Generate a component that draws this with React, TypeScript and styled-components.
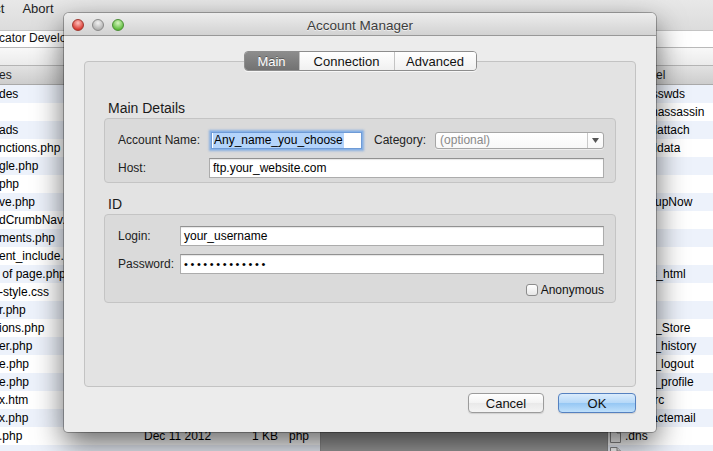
import React from "react";
import styled, { createGlobalStyle, css } from "styled-components";

const GlobalStyle = createGlobalStyle`
    html, body {
        margin: 0;
        padding: 0;
        background: #e2e2e2;
    }
    body {
        font-family: "Liberation Sans", Arial, sans-serif;
    }
    * {
        box-sizing: border-box;
    }
`;

// only the tails of the local file names show beside the dialog
const leftRows = [
    "des", "", "ads", "nctions.php", "gle.php", "php", "ve.php", "dCrumbNav.php",
    "ments.php", "ent_include.php", "\u00a0of page.php", "-style.css", "r.php",
    "ions.php", "er.php", "e.php", "e.php", "x.htm", "x.php", ".php", "",
];

const rightRows = [
    ".htpasswds", ".spamassassin", ".emailattach", ".emaildata", "etc", "mail",
    ".BackupNow", "logs", "ssl", "perl", "public_html", "tmp", "www", ".._DS_Store",
    ".bash_history", ".bash_logout", ".bash_profile", ".bashrc", ".contactemail",
    ".dns", "",
];

// the row whose details are visible under the dialog
const DETAIL_ROW = 19;

const App = () => {
    return (
        <Desktop>
            <GlobalStyle />
            <Toolbar>
                <ToolLabel>Connect</ToolLabel>
                <ToolLabel>Abort</ToolLabel>
            </Toolbar>
            <PathBar>cator Developer Tools</PathBar>
            <SubBar />
            <Panes>
                <LeftPane>
                    <ListHeader>
                        <NameCell>es</NameCell>
                    </ListHeader>
                    {leftRows.map((name, i) => (
                        <LeftRow key={i} $striped={i % 2 === 0}>
                            <NameCell>{name}</NameCell>
                            {i === DETAIL_ROW && (
                                <>
                                    <span>Dec 11 2012</span>
                                    <SizeCell>1 KB</SizeCell>
                                    <KindCell>php</KindCell>
                                </>
                            )}
                        </LeftRow>
                    ))}
                </LeftPane>
                <MiddlePane />
                <RightPane>
                    <RightHeader>Label</RightHeader>
                    {rightRows.map((name, i) => (
                        <RightRow key={i} $striped={i % 2 === 0}>
                            <FileIcon />
                            {name && <span>{name}</span>}
                        </RightRow>
                    ))}
                </RightPane>
            </Panes>

            <Dialog>
                <TitleBar>
                    <Lights>
                        <Light $kind="close" />
                        <Light $kind="min" />
                        <Light $kind="zoom" />
                    </Lights>
                    <Title>Account Manager</Title>
                    <span />
                </TitleBar>
                <Body>
                    <TabGroup>
                        <Tab $w={54} $active>Main</Tab>
                        <Tab $w={95}>Connection</Tab>
                        <Tab $w={82}>Advanced</Tab>
                    </TabGroup>
                    <Panel>
                        <Section>
                            <SectionTitle>Main Details</SectionTitle>
                            <GroupBox $padTop={11} $padBottom={4}>
                                <FormRow>
                                    <FieldLabel $w={93}>Account Name:</FieldLabel>
                                    <Field $focused>
                                        <Selected>Any_name_you_choose</Selected>
                                    </Field>
                                    <FieldLabel $ml={12}>Category:</FieldLabel>
                                    <Select>
                                        <Placeholder>(optional)</Placeholder>
                                        <SelectArrow>
                                            <svg width="7" height="5" viewBox="0 0 7 5">
                                                <polygon points="0,0 7,0 3.5,5" fill="#555" />
                                            </svg>
                                        </SelectArrow>
                                    </Select>
                                </FormRow>
                                <FormRow>
                                    <FieldLabel $w={91}>Host:</FieldLabel>
                                    <Field>ftp.your_website.com</Field>
                                </FormRow>
                            </GroupBox>
                        </Section>
                        <Section>
                            <SectionTitle>ID</SectionTitle>
                            <GroupBox $padTop={11} $padBottom={4}>
                                <FormRow>
                                    <FieldLabel $w={62}>Login:</FieldLabel>
                                    <Field>your_username</Field>
                                </FormRow>
                                <FormRow>
                                    <FieldLabel $w={62}>Password:</FieldLabel>
                                    <Field $secret>{"•".repeat(13)}</Field>
                                </FormRow>
                                <CheckRow>
                                    <Checkbox />
                                    <span>Anonymous</span>
                                </CheckRow>
                            </GroupBox>
                        </Section>
                    </Panel>
                    <ButtonRow>
                        <Button $w={76}>Cancel</Button>
                        <Button $w={78} $primary>OK</Button>
                    </ButtonRow>
                </Body>
            </Dialog>
        </Desktop>
    );
};

export default App;

const FileIcon = () => (
    <svg width="11" height="14" viewBox="0 0 11 14">
        <path d="M0.5 0.5 H7 L10.5 4 V13.5 H0.5 Z" fill="#fff" stroke="#8a8a8a" />
        <path d="M7 0.5 V4 H10.5" fill="#e8e8e8" stroke="#8a8a8a" />
    </svg>
);

/* ---------- background app ---------- */

const Desktop = styled.div`
    position: relative;
    width: 713px;
    height: 451px;
    overflow: hidden;
    display: flex;
    flex-direction: column;
    background: #e2e2e2;
    font-family: "Liberation Sans", Arial, sans-serif;
    color: #000;
`;

const Toolbar = styled.div`
    flex: none;
    height: 30px;
    display: flex;
    gap: 18px;
    margin-left: -44px;
    padding-top: 1px;
    background: linear-gradient(#e8e8e8, #dcdcdc);
    font-size: 13px;
    line-height: 16px;
    color: #1e1e1e;
`;

const ToolLabel = styled.span`
    white-space: nowrap;
`;

const PathBar = styled.div`
    flex: none;
    height: 17px;
    text-indent: -1px;
    background: #fff;
    border-top: 1px solid #c4c4c4;
    font-size: 12px;
    line-height: 15px;
    color: #111;
    white-space: nowrap;
    overflow: hidden;
`;

const SubBar = styled.div`
    flex: none;
    height: 19px;
    background: linear-gradient(#f8f8f8, #ebebeb);
    border-top: 1px solid #b9b9b9;
    border-bottom: 1px solid #b4b4b4;
`;

const Panes = styled.div`
    flex: 1;
    display: flex;
    min-height: 0;
`;

const LeftPane = styled.div`
    width: 321px;
    flex: none;
    background: #fff;
    border-right: 1px solid #8e8e8e;
    overflow: hidden;
`;

const listGrid = css`
    display: grid;
    grid-template-columns: 144px 100px 34px 1fr;
    font-size: 12px;
    white-space: nowrap;
`;

const ListHeader = styled.div`
    ${listGrid};
    height: 19px;
    line-height: 18px;
    background: linear-gradient(#e2e2e2, #cdcdcd);
    border-bottom: 1px solid #a9a9a9;
    color: #1e1e1e;
`;

const LeftRow = styled.div<{ $striped: boolean }>`
    ${listGrid};
    height: 18px;
    line-height: 18px;
    background: ${(p) => (p.$striped ? "#edf2fb" : "#ffffff")};
    color: #000;
`;

const NameCell = styled.span`
    overflow: hidden;
    text-indent: -1px;
`;

const SizeCell = styled.span`
    text-align: right;
`;

const KindCell = styled.span`
    padding-left: 11px;
`;

const MiddlePane = styled.div`
    flex: 1;
    background: #9c9c9c;
`;

const RightPane = styled.div`
    width: 106px;
    flex: none;
    background: #fff;
    border-left: 1px solid #8e8e8e;
    overflow: hidden;
`;

const RightHeader = styled.div`
    height: 19px;
    padding-left: 28px;
    font-size: 12px;
    line-height: 18px;
    background: linear-gradient(#e2e2e2, #cdcdcd);
    border-bottom: 1px solid #a9a9a9;
    color: #1e1e1e;
    white-space: nowrap;
`;

const RightRow = styled.div<{ $striped: boolean }>`
    height: 18px;
    display: flex;
    align-items: center;
    gap: 4px;
    padding-left: 2px;
    font-size: 12px;
    white-space: nowrap;
    background: ${(p) => (p.$striped ? "#edf2fb" : "#ffffff")};

    & svg {
        flex: none;
    }
`;

/* ---------- dialog window ---------- */

const Dialog = styled.div`
    position: absolute;
    left: 64px;
    top: 13px;
    width: 592px;
    height: 419px;
    display: flex;
    flex-direction: column;
    background: #ececec;
    border-radius: 5px 5px 4px 4px;
    box-shadow: 0 0 0 1px rgba(0, 0, 0, 0.28), 0 12px 30px rgba(0, 0, 0, 0.6);
    overflow: hidden;
`;

const TitleBar = styled.div`
    flex: none;
    height: 23px;
    display: grid;
    grid-template-columns: 1fr auto 1fr;
    align-items: center;
    padding: 2px 8px 0;
    background: linear-gradient(#ededed, #d2d2d2);
    border-bottom: 1px solid #989898;
`;

const Lights = styled.div`
    display: flex;
    gap: 8px;
`;

const lightColors = {
    close: { hi: "#ffc0bc", lo: "#d8382f", edge: "#a0372f" },
    min: { hi: "#f2f2f2", lo: "#b1b1b1", edge: "#8a8a8a" },
    zoom: { hi: "#d5f5bf", lo: "#5cbb3a", edge: "#4a8e34" },
};

const Light = styled.span<{ $kind: "close" | "min" | "zoom" }>`
    width: 12px;
    height: 12px;
    border-radius: 50%;
    border: 1px solid ${(p) => lightColors[p.$kind].edge};
    background: radial-gradient(
        circle at 50% 30%,
        ${(p) => lightColors[p.$kind].hi} 0%,
        ${(p) => lightColors[p.$kind].lo} 75%
    );
`;

const Title = styled.span`
    font-size: 13.5px;
    color: #3d3d3d;
    text-shadow: 0 1px 0 rgba(255, 255, 255, 0.6);
`;

const Body = styled.div`
    flex: 1;
    display: flex;
    flex-direction: column;
    padding: 15px 20px 19px;
    min-height: 0;
`;

const TabGroup = styled.div`
    align-self: center;
    display: flex;
    height: 20px;
    margin-bottom: -10px;
    position: relative;
    z-index: 1;
    border: 1px solid #8d8d8d;
    border-radius: 4px;
    overflow: hidden;
    box-shadow: 0 1px 0 rgba(255, 255, 255, 0.7);
`;

const Tab = styled.div<{ $w: number; $active?: boolean }>`
    width: ${(p) => p.$w}px;
    display: flex;
    align-items: center;
    justify-content: center;
    font-size: 13px;
    color: #111;
    background: linear-gradient(#ffffff, #f0f0f0);

    & + & {
        border-left: 1px solid #c4c4c4;
    }

    ${(p) =>
        p.$active &&
        css`
            color: #fff;
            background: linear-gradient(#8c8c8c, #727272);
            text-shadow: 0 -1px 0 rgba(0, 0, 0, 0.35);
        `}
`;

const Panel = styled.div`
    flex: 1;
    display: flex;
    flex-direction: column;
    gap: 13px;
    padding: 38px 19px 0;
    background: #e3e3e3;
    border: 1px solid #c3c3c3;
    border-radius: 4px;
`;

const Section = styled.div`
    display: flex;
    flex-direction: column;
    gap: 2px;
`;

const SectionTitle = styled.div`
    font-size: 14px;
    line-height: 16px;
    padding-left: 4px;
    color: #1a1a1a;
`;

const GroupBox = styled.div<{ $padTop: number; $padBottom: number }>`
    display: flex;
    flex-direction: column;
    gap: 8px;
    padding: ${(p) => p.$padTop}px 11px ${(p) => p.$padBottom}px 13px;
    background: #dadada;
    border: 1px solid #c4c4c4;
    border-radius: 4px;
`;

const FormRow = styled.div`
    height: 20px;
    display: flex;
    align-items: center;
`;

const FieldLabel = styled.span<{ $w?: number; $ml?: number }>`
    flex: none;
    width: ${(p) => (p.$w ? `${p.$w}px` : "auto")};
    margin-left: ${(p) => p.$ml ?? 0}px;
    margin-right: ${(p) => (p.$w ? 0 : 9)}px;
    font-size: 12px;
    color: #222;
    white-space: nowrap;
`;

const Field = styled.div<{ $focused?: boolean; $secret?: boolean }>`
    flex: 1;
    height: 20px;
    display: flex;
    align-items: center;
    padding: 0 3px;
    background: #fff;
    border: 1px solid #acacac;
    border-top-color: #919191;
    box-shadow: inset 0 1px 1px rgba(0, 0, 0, 0.1);
    font-size: 12px;
    color: #000;
    white-space: nowrap;
    overflow: hidden;

    ${(p) =>
        p.$focused &&
        css`
            flex: none;
            width: 151px;
            height: 17px;
            padding: 0 1px;
            border-color: #6f9bd6;
            box-shadow: 0 0 0 1px #89b2e6, 0 0 2px 2px rgba(110, 160, 225, 0.75);
        `}

    ${(p) =>
        p.$secret &&
        css`
            letter-spacing: 2.6px;
            font-size: 11px;
        `}
`;

const Selected = styled.span`
    background: #b4d4fb;
    padding: 0 1px;
    line-height: 15px;
`;

const Select = styled.div`
    flex: 1;
    height: 17px;
    display: flex;
    align-items: stretch;
    background: linear-gradient(#ffffff, #f8f8f8);
    border: 1px solid #a6a6a6;
    border-radius: 3px;
    box-shadow: 0 1px 0 rgba(255, 255, 255, 0.5);
`;

const Placeholder = styled.span`
    flex: 1;
    padding-left: 4px;
    font-size: 12px;
    line-height: 15px;
    color: #8a8a8a;
`;

const SelectArrow = styled.span`
    width: 16px;
    display: flex;
    align-items: center;
    justify-content: center;
    border-left: 1px solid #c9c9c9;
`;

const CheckRow = styled.div`
    height: 16px;
    display: flex;
    align-items: center;
    justify-content: flex-end;
    gap: 3px;
    font-size: 12px;
    color: #111;
`;

const Checkbox = styled.span`
    width: 12px;
    height: 12px;
    border: 1px solid #8c8c8c;
    border-radius: 3px;
    background: linear-gradient(#ffffff, #e6e6e6);
`;

const ButtonRow = styled.div`
    display: flex;
    justify-content: flex-end;
    gap: 14px;
    margin-top: 6px;
`;

const Button = styled.div<{ $w: number; $primary?: boolean }>`
    width: ${(p) => p.$w}px;
    height: 20px;
    display: flex;
    align-items: center;
    justify-content: center;
    font-size: 13px;
    color: #111;
    border-radius: 4px;
    border: 1px solid #9b9b9b;
    background: linear-gradient(#ffffff, #f3f3f3 50%, #e9e9e9 51%, #f4f4f4);
    box-shadow: 0 1px 1px rgba(0, 0, 0, 0.12);

    ${(p) =>
        p.$primary &&
        css`
            border-color: #5581c0;
            background: linear-gradient(#dbecfc, #b5d8f8 50%, #95c7f4 51%, #bfe0fb);
        `}
`;
